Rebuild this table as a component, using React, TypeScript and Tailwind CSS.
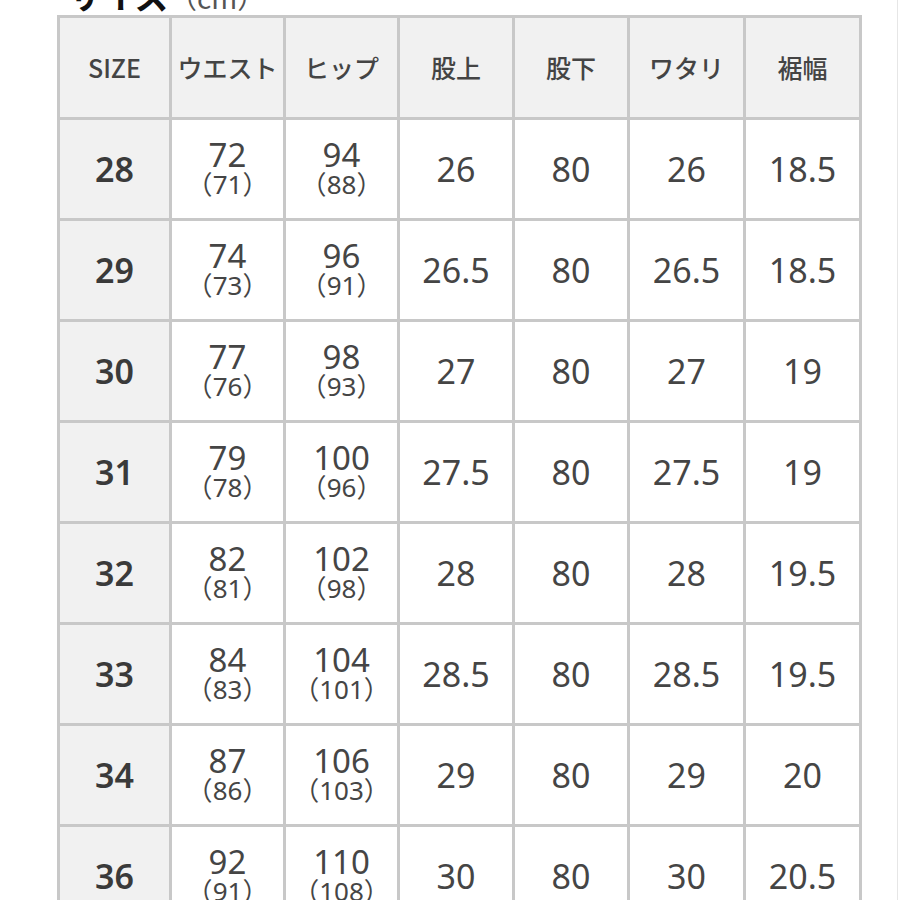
const HEADERS = ['SIZE', 'ウエスト', 'ヒップ', '股上', '股下', 'ワタリ', '裾幅'];

type Row = {
  size: string;
  waist: [string, string];
  hip: [string, string];
  rise: string;
  inseam: string;
  thigh: string;
  hem: string;
};

const ROWS: Row[] = [
  { size: '28', waist: ['72', '71'], hip: ['94', '88'], rise: '26', inseam: '80', thigh: '26', hem: '18.5' },
  { size: '29', waist: ['74', '73'], hip: ['96', '91'], rise: '26.5', inseam: '80', thigh: '26.5', hem: '18.5' },
  { size: '30', waist: ['77', '76'], hip: ['98', '93'], rise: '27', inseam: '80', thigh: '27', hem: '19' },
  { size: '31', waist: ['79', '78'], hip: ['100', '96'], rise: '27.5', inseam: '80', thigh: '27.5', hem: '19' },
  { size: '32', waist: ['82', '81'], hip: ['102', '98'], rise: '28', inseam: '80', thigh: '28', hem: '19.5' },
  { size: '33', waist: ['84', '83'], hip: ['104', '101'], rise: '28.5', inseam: '80', thigh: '28.5', hem: '19.5' },
  { size: '34', waist: ['87', '86'], hip: ['106', '103'], rise: '29', inseam: '80', thigh: '29', hem: '20' },
  { size: '36', waist: ['92', '91'], hip: ['110', '108'], rise: '30', inseam: '80', thigh: '30', hem: '20.5' },
];

const font = { fontFamily: '"Noto Sans", "Noto Sans CJK JP", sans-serif' };
const jp = { fontFamily: '"Noto Sans CJK JP", sans-serif' };

function Pair({ value }: { value: [string, string] }) {
  return (
    <div className="flex flex-col items-center">
      <span className="text-[33px] leading-[30px]">{value[0]}</span>
      <span className="text-[26px] leading-[29px]">（{value[1]}）</span>
    </div>
  );
}

function Cell({ children }: { children: React.ReactNode }) {
  return (
    <div className="bg-white h-[98px] flex items-center justify-center text-[#454545] text-[34px]">
      {children}
    </div>
  );
}

export default function App() {
  return (
    <div className="w-[898px] min-h-[900px] bg-white border-r border-[#e6e6e6] overflow-hidden" style={font}>
      <div className="pl-[68px] -mt-[28px] h-[43px] leading-[45px] whitespace-nowrap">
        <span className="text-[34px] font-bold text-[#111]" style={jp}>
          サイズ
        </span>
        <span className="text-[28px] text-[#555]" style={jp}>
          （cm）
        </span>
      </div>
      <div className="ml-[57px] w-fit">
        <div className="grid grid-cols-[109px_111px_111px_112px_112px_113px_113px] gap-[3px] p-[3px] bg-[#c8c8c8]">
          {HEADERS.map((h) => (
            <div
              key={h}
              className="bg-[#f1f1f1] h-[99px] flex items-center justify-center text-[25px] font-medium text-[#444]"
              style={jp}
            >
              {h}
            </div>
          ))}
          {ROWS.map((r) => (
            <>
              <div
                key={r.size}
                className="bg-[#f1f1f1] h-[98px] flex items-center justify-center text-[34px] font-semibold text-[#3a3a3a]"
              >
                {r.size}
              </div>
              <Cell>
                <Pair value={r.waist} />
              </Cell>
              <Cell>
                <Pair value={r.hip} />
              </Cell>
              <Cell>{r.rise}</Cell>
              <Cell>{r.inseam}</Cell>
              <Cell>{r.thigh}</Cell>
              <Cell>{r.hem}</Cell>
            </>
          ))}
        </div>
      </div>
    </div>
  );
}
